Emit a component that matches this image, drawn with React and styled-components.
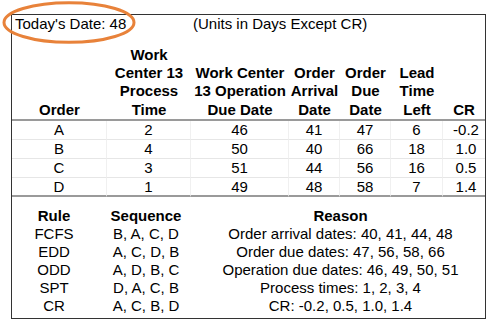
import styled, { createGlobalStyle } from "styled-components";

const GlobalStyle = createGlobalStyle`
  html, body {
    margin: 0;
    padding: 0;
    background: #ffffff;
  }
  body {
    font-family: "Liberation Sans", Arial, sans-serif;
    color: #000;
  }
`;

const orders = [
  { order: "A", time: 2, opDue: 46, arrival: 41, due: 47, lead: 6, cr: "-0.2" },
  { order: "B", time: 4, opDue: 50, arrival: 40, due: 66, lead: 18, cr: "1.0" },
  { order: "C", time: 3, opDue: 51, arrival: 44, due: 56, lead: 16, cr: "0.5" },
  { order: "D", time: 1, opDue: 49, arrival: 48, due: 58, lead: 7, cr: "1.4" },
];

const rules = [
  { rule: "FCFS", seq: "B, A, C, D", reason: "Order arrival dates: 40, 41, 44, 48" },
  { rule: "EDD", seq: "A, C, D, B", reason: "Order due dates: 47, 56, 58, 66" },
  { rule: "ODD", seq: "A, D, B, C", reason: "Operation due dates: 46, 49, 50, 51" },
  { rule: "SPT", seq: "D, A, C, B", reason: "Process times: 1, 2, 3, 4" },
  { rule: "CR", seq: "A, C, B, D", reason: "CR: -0.2, 0.5, 1.0, 1.4" },
];

export default function App() {
  return (
    <Page>
      <GlobalStyle />
      <Sheet>
        <TopTable>
          <DateCell>Today's Date: 48</DateCell>
          <UnitsCell>(Units in Days Except CR)</UnitsCell>

          <HeadCell>Order</HeadCell>
          <HeadCell>
            Work
            <br />
            Center 13
            <br />
            Process
            <br />
            Time
          </HeadCell>
          <HeadCell>
            Work Center
            <br />
            13 Operation
            <br />
            Due Date
          </HeadCell>
          <HeadCell>
            Order
            <br />
            Arrival
            <br />
            Date
          </HeadCell>
          <HeadCell>
            Order
            <br />
            Due
            <br />
            Date
          </HeadCell>
          <HeadCell>
            Lead
            <br />
            Time
            <br />
            Left
          </HeadCell>
          <HeadCell>CR</HeadCell>

          {orders.map((o, i) => {
            const last = i === orders.length - 1;
            return [o.order, o.time, o.opDue, o.arrival, o.due, o.lead, o.cr].map(
              (v, j) => (
                <DataCell key={o.order + j} $last={last} $edge={j === 6} $cr={j === 6}>
                  {v}
                </DataCell>
              )
            );
          })}
        </TopTable>

        <RuleTable>
          <RuleHead>Rule</RuleHead>
          <RuleHead>Sequence</RuleHead>
          <RuleHead>Reason</RuleHead>
          {rules.map((r) => [
            <RuleCell key={r.rule + "r"}>{r.rule}</RuleCell>,
            <RuleCell key={r.rule + "s"}>{r.seq}</RuleCell>,
            <RuleCell key={r.rule + "x"}>{r.reason}</RuleCell>,
          ])}
        </RuleTable>
      </Sheet>

      <Highlight width="134" height="43" viewBox="0 0 134 43">
        <ellipse cx="67" cy="21.5" rx="65" ry="19.8" fill="none" stroke="#E8823A" strokeWidth="3" />
      </Highlight>
    </Page>
  );
}

const Page = styled.div`
  position: relative;
  width: 490px;
  height: 323px;
  padding: 14px 0 0 11px;
  box-sizing: border-box;
`;

const Sheet = styled.div`
  width: 475px;
  height: 305px;
  box-sizing: border-box;
  border: 1px solid #333;
  display: flex;
  flex-direction: column;
`;

const TopTable = styled.div`
  display: grid;
  grid-template-columns: 95px 84px 98px 51px 51px 52px 42px;
  grid-template-rows: 22px 84px repeat(4, 19px);
  font-size: 15px;
`;

const DateCell = styled.div`
  grid-column: 1 / span 2;
  padding: 0 0 0 3px;
  line-height: 18px;
`;

const UnitsCell = styled.div`
  grid-column: 3 / span 5;
  padding: 0 0 0 2px;
  line-height: 18px;
`;

const HeadCell = styled.div`
  display: flex;
  align-items: flex-end;
  justify-content: center;
  text-align: center;
  font-weight: bold;
  line-height: 18.3px;
  border-bottom: 2px solid #9a9a9a;
  white-space: nowrap;
`;

const DataCell = styled.div`
  display: flex;
  align-items: center;
  justify-content: center;
  line-height: 18px;
  border-bottom: ${(p) => (p.$last ? "2px solid #9a9a9a" : "1px solid #e6e6e6")};
  border-right: ${(p) => (p.$edge ? "none" : "1px solid #f0f0f0")};
  padding-top: ${(p) => (p.$last ? "1px" : "0")};
  padding-left: ${(p) => (p.$cr ? "4px" : "0")};
`;

const RuleTable = styled.div`
  display: grid;
  grid-template-columns: 84px 100px 1fr;
  grid-auto-rows: 18px;
  padding-top: 10px;
  font-size: 15px;
`;

const RuleHead = styled.div`
  text-align: center;
  font-weight: bold;
  line-height: 18px;
`;

const RuleCell = styled.div`
  text-align: center;
  line-height: 18px;
  white-space: nowrap;
`;

const Highlight = styled.svg`
  position: absolute;
  left: 2px;
  top: 1px;
  pointer-events: none;
`;
